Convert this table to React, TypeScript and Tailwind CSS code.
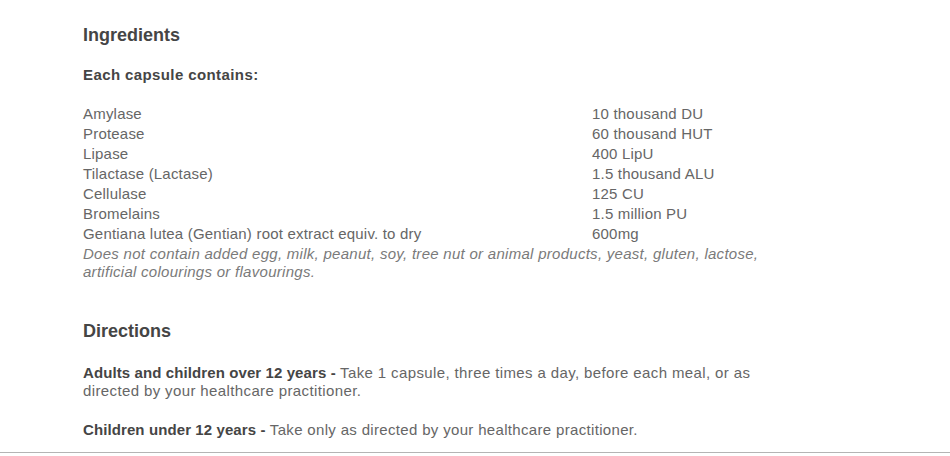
import React from "react";

const rows: [string, string][] = [
  ["Amylase", "10 thousand DU"],
  ["Protease", "60 thousand HUT"],
  ["Lipase", "400 LipU"],
  ["Tilactase (Lactase)", "1.5 thousand ALU"],
  ["Cellulase", "125 CU"],
  ["Bromelains", "1.5 million PU"],
  ["Gentiana lutea (Gentian) root extract equiv. to dry", "600mg"],
];

export default function App() {
  return (
    <div
      className="w-[950px] h-[456px] bg-white flex flex-col"
      style={{ fontFamily: '"Liberation Sans", Arial, sans-serif' }}
    >
      <div className="flex-1 pl-[83px] pt-[23px] text-[15px] tracking-[0.2px] text-[#666]">
        <h2 className="text-[18px] leading-[24px] tracking-normal font-bold text-[#454545]">Ingredients</h2>
        <p className="mt-[18px] leading-[20px] tracking-[0.4px] font-bold text-[#454545]">Each capsule contains:</p>
        <div className="mt-[19px] grid grid-cols-[509px_auto] leading-[20px]">
          {rows.map(([a, b]) => (
            <React.Fragment key={a}>
              <div>{a}</div>
              <div>{b}</div>
            </React.Fragment>
          ))}
        </div>
        <p className="mt-[1px] italic leading-[18px] tracking-[0.28px] text-[#7a7a7a]">
          Does not contain added egg, milk, peanut, soy, tree nut or animal products, yeast, gluten, lactose,
          <br />
          artificial colourings or flavourings.
        </p>
        <h2 className="mt-[38px] text-[18px] leading-[24px] tracking-normal font-bold text-[#454545]">Directions</h2>
        <p className="mt-[21px] leading-[18px] tracking-[0.38px]">
          <span className="font-bold tracking-[0.1px] text-[#454545]">Adults and children over 12 years - </span>
          Take 1 capsule, three times a day, before each meal, or as
          <br />
          directed by your healthcare practitioner.
        </p>
        <p className="mt-[21px] leading-[18px] tracking-[0.33px]">
          <span className="font-bold tracking-[0.1px] text-[#454545]">Children under 12 years - </span>
          Take only as directed by your healthcare practitioner.
        </p>
      </div>
      <div className="h-[1px] bg-[#b4b4b4]" />
      <div className="h-[3px]" />
    </div>
  );
}
